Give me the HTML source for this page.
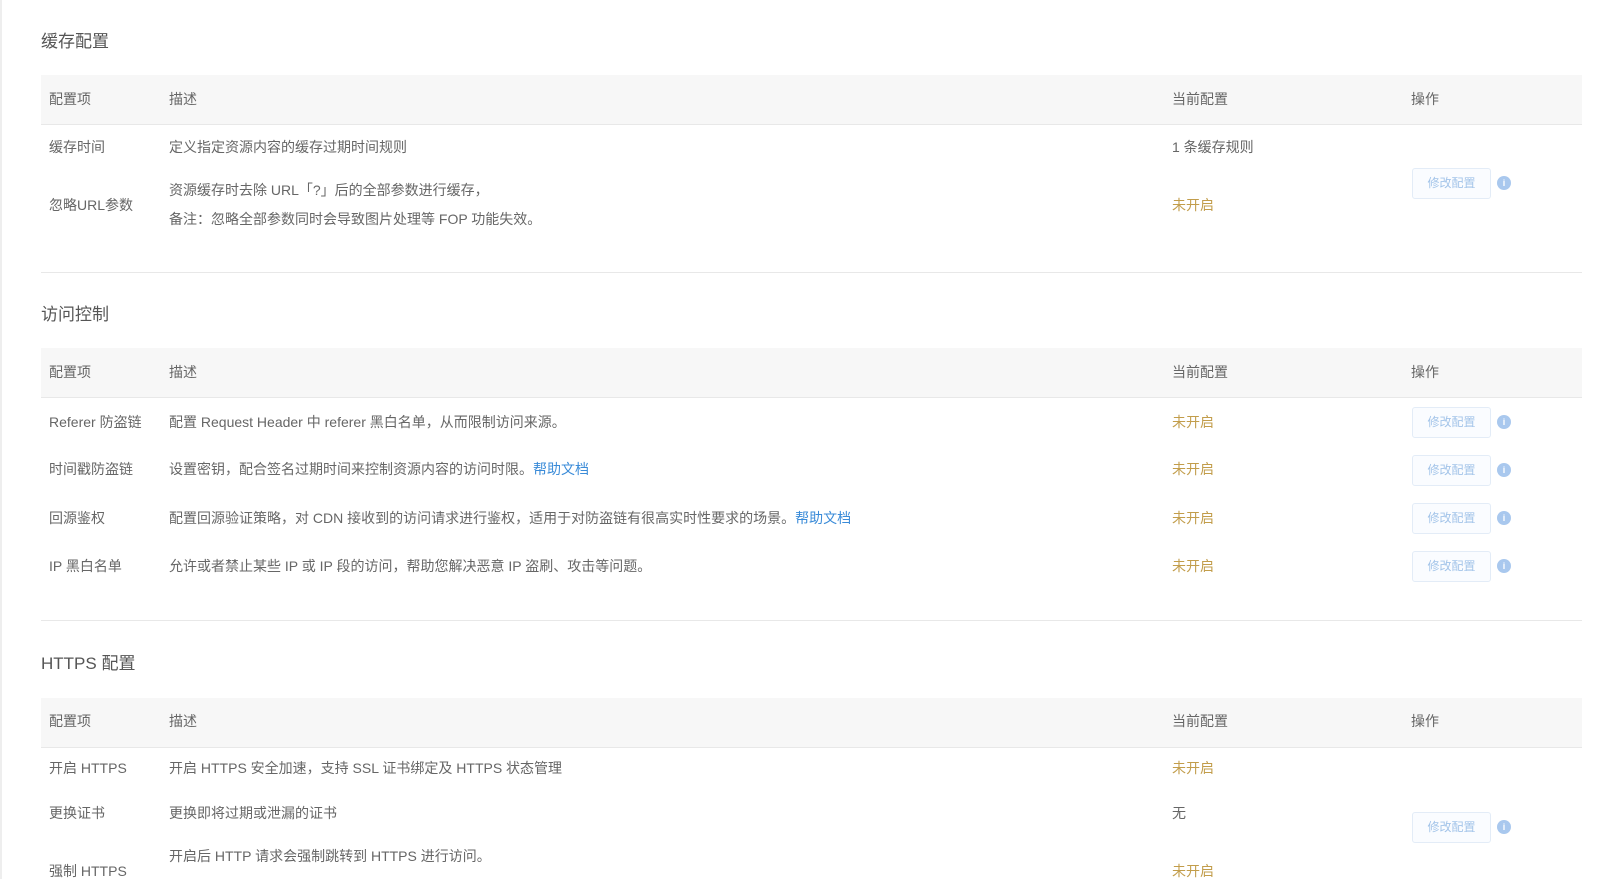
<!DOCTYPE html>
<html><head><meta charset="utf-8"><style>
*{margin:0;padding:0;box-sizing:border-box}
body{width:1622px;height:879px;background:#fff;position:relative;overflow:hidden;font-family:"Liberation Sans","Noto Sans CJK SC",sans-serif;font-size:14px;color:#666}
.a{position:absolute;white-space:nowrap;line-height:20px}
.t{position:absolute;left:41px;font-size:17px;color:#555;line-height:24px}
.hd{position:absolute;left:41px;width:1541px;height:50px;background:#f7f7f7;border-bottom:1px solid #e8e8e8}
.dv{position:absolute;left:41px;width:1541px;height:1px;background:#e8e8e8}
.o{color:#c29d4b}
.l{color:#3a8bd8}
.b{position:absolute;left:1412px;width:79px;height:31px;border:1px solid #e3ecf7;border-radius:3px;background:#fafcff;color:#a3c4e9;font-size:12px;line-height:29px;text-align:center}
.i{position:absolute;left:1497px;width:14px;height:14px;border-radius:50%;background:#a9c8ee;color:#fff;font-size:9px;line-height:14px;text-align:center;font-weight:bold}
</style></head><body>
<div style="position:absolute;left:0;top:0;width:2px;height:879px;background:#eee"></div>

<div class="t" style="top:30px">缓存配置</div>
<div class="hd" style="top:75px"></div>
<div class="a" style="left:49px;top:89px">配置项</div><div class="a" style="left:169px;top:89px">描述</div><div class="a" style="left:1172px;top:89px">当前配置</div><div class="a" style="left:1411px;top:89px">操作</div>
<div class="a" style="left:49px;top:137px">缓存时间</div><div class="a" style="left:169px;top:137px">定义指定资源内容的缓存过期时间规则</div><div class="a" style="left:1172px;top:137px">1 条缓存规则</div>
<div class="a" style="left:49px;top:195px">忽略URL参数</div><div class="a" style="left:169px;top:180px">资源缓存时去除 URL「?」后的全部参数进行缓存，</div><div class="a" style="left:169px;top:209px">备注：忽略全部参数同时会导致图片处理等 FOP 功能失效。</div><div class="a o" style="left:1172px;top:195px">未开启</div>
<div class="b" style="top:168px">修改配置</div><div class="i" style="top:176px">i</div>
<div class="dv" style="top:272px"></div>

<div class="t" style="top:303px">访问控制</div>
<div class="hd" style="top:348px"></div>
<div class="a" style="left:49px;top:362px">配置项</div><div class="a" style="left:169px;top:362px">描述</div><div class="a" style="left:1172px;top:362px">当前配置</div><div class="a" style="left:1411px;top:362px">操作</div>
<div class="a" style="left:49px;top:412px">Referer 防盗链</div><div class="a" style="left:169px;top:412px">配置 Request Header 中 referer 黑白名单，从而限制访问来源。</div><div class="a o" style="left:1172px;top:412px">未开启</div>
<div class="b" style="top:407px">修改配置</div><div class="i" style="top:415px">i</div>
<div class="a" style="left:49px;top:459px">时间戳防盗链</div><div class="a" style="left:169px;top:459px">设置密钥，配合签名过期时间来控制资源内容的访问时限。<span class="l">帮助文档</span></div><div class="a o" style="left:1172px;top:459px">未开启</div>
<div class="b" style="top:455px">修改配置</div><div class="i" style="top:463px">i</div>
<div class="a" style="left:49px;top:508px">回源鉴权</div><div class="a" style="left:169px;top:508px">配置回源验证策略，对 CDN 接收到的访问请求进行鉴权，适用于对防盗链有很高实时性要求的场景。<span class="l">帮助文档</span></div><div class="a o" style="left:1172px;top:508px">未开启</div>
<div class="b" style="top:503px">修改配置</div><div class="i" style="top:511px">i</div>
<div class="a" style="left:49px;top:556px">IP 黑白名单</div><div class="a" style="left:169px;top:556px">允许或者禁止某些 IP 或 IP 段的访问，帮助您解决恶意 IP 盗刷、攻击等问题。</div><div class="a o" style="left:1172px;top:556px">未开启</div>
<div class="b" style="top:551px">修改配置</div><div class="i" style="top:559px">i</div>
<div class="dv" style="top:620px"></div>

<div class="t" style="top:652px">HTTPS 配置</div>
<div class="hd" style="top:698px"></div>
<div class="a" style="left:49px;top:711px">配置项</div><div class="a" style="left:169px;top:711px">描述</div><div class="a" style="left:1172px;top:711px">当前配置</div><div class="a" style="left:1411px;top:711px">操作</div>
<div class="a" style="left:49px;top:758px">开启 HTTPS</div><div class="a" style="left:169px;top:758px">开启 HTTPS 安全加速，支持 SSL 证书绑定及 HTTPS 状态管理</div><div class="a o" style="left:1172px;top:758px">未开启</div>
<div class="a" style="left:49px;top:803px">更换证书</div><div class="a" style="left:169px;top:803px">更换即将过期或泄漏的证书</div><div class="a" style="left:1172px;top:803px">无</div>
<div class="b" style="top:812px">修改配置</div><div class="i" style="top:820px">i</div>
<div class="a" style="left:169px;top:846px">开启后 HTTP 请求会强制跳转到 HTTPS 进行访问。</div>
<div class="a" style="left:49px;top:861px">强制 HTTPS</div><div class="a o" style="left:1172px;top:861px">未开启</div>
</body></html>
